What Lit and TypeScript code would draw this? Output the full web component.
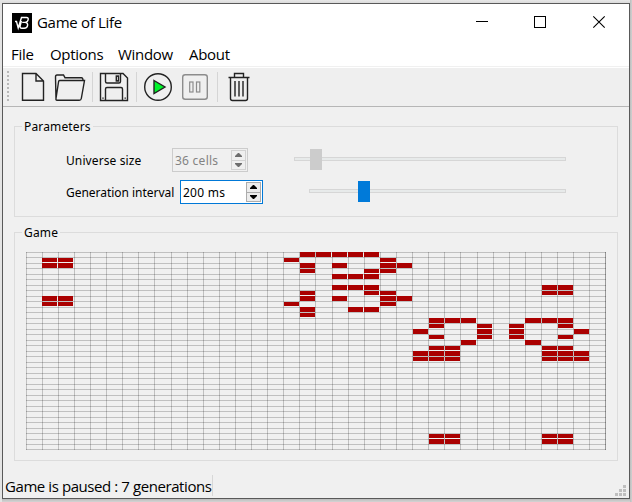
import { LitElement, html, css, svg } from "lit";
import { customElement, property } from "lit/decorators.js";

const SIZE = 36;

// Living cells, keyed by row.
const LIVE: Record<number, number[]> = {
  0: [17, 18, 19, 20, 21],
  1: [1, 2, 16, 22],
  2: [1, 2, 17, 19, 22, 23],
  3: [17, 21, 22],
  4: [19, 20, 21],
  6: [19, 20, 21, 32, 33],
  7: [17, 21, 22, 32, 33],
  8: [1, 2, 17, 19, 22, 23],
  9: [1, 2, 16, 22],
  10: [17, 20, 21],
  11: [17],
  12: [25, 26, 27, 31, 32, 33],
  13: [25, 28, 30, 33],
  14: [24, 28, 30, 34],
  15: [25, 28, 30, 33],
  16: [27, 31],
  17: [25, 26, 32, 33],
  18: [24, 25, 26, 32, 33, 34],
  19: [24, 25, 26, 32, 33, 34],
  33: [25, 26, 32, 33],
  34: [25, 26, 32, 33],
};

const lineX = (i: number) => Math.floor(i * 16.1057 + 0.05);
const lineY = (i: number) => Math.min(197, Math.floor(i * 5.5));
const cellX = (i: number) => Math.floor(i * 16.1112 + 0.45);
const cellY = (i: number) => Math.ceil(i * 5.5);

@customElement("life-board")
export class LifeBoard extends LitElement {
  static styles = css`
    :host { display: block; height: 198px; }
    svg { display: block; shape-rendering: crispEdges; }
    .line { fill: #000; fill-opacity: 0.2; }
    .cell { fill: #aa0000; }
  `;
  render() {
    const idx = Array.from({ length: SIZE + 1 }, (_, i) => i);
    return html`<svg width="580" height="198" viewBox="0 0 580 198">
      ${idx.map((i) => svg`<rect class="line" x=${lineX(i)} y="0" width="1" height="198" />`)}
      ${idx.map((i) => svg`<rect class="line" x="0" y=${lineY(i)} width="580" height="1" />`)}
      <rect class="line" x="579" y="0" width="1" height="198" />
      ${Object.entries(LIVE).map(([r, cols]) =>
        cols.map(
          (c) => svg`<rect class="cell" x=${cellX(c)} y=${cellY(+r)}
            width=${cellX(c + 1) - cellX(c) - 1} height=${cellY(+r + 1) - cellY(+r) - 1} />`
        )
      )}
    </svg>`;
  }
}

@customElement("group-box")
export class GroupBox extends LitElement {
  @property() label = "";
  static styles = css`
    :host { display: block; box-sizing: border-box; border: 1px solid #dcdcdc; }
    .label {
      display: block; width: max-content; height: 16px; line-height: 18px;
      margin: -9px 0 0 7px; padding: 0 2px; background: #f0f0f0; letter-spacing: 0.15px;
    }
  `;
  render() {
    return html`<span class="label">${this.label}</span><slot></slot>`;
  }
}

@customElement("spin-box")
export class SpinBox extends LitElement {
  @property() value = "";
  @property({ type: Boolean, reflect: true }) disabled = false;
  static styles = css`
    :host {
      display: flex; box-sizing: border-box; height: 24px; width: 83px; padding: 1px;
      border: 1px solid #0078d7; background: #fff; color: #000;
    }
    :host([disabled]) { width: 76px; border-color: #ccc; background: #f0f0f0; color: #838383; }
    .value { flex: 1; padding-left: 1px; line-height: 22px; white-space: nowrap; letter-spacing: 0.25px; }
    .buttons { display: flex; flex-direction: column; width: 15px; }
    .btn {
      flex: 1; display: flex; align-items: center; justify-content: center;
      border: 1px solid #acacac; background: #ececec; box-sizing: border-box; height: 10px;
    }
    .btn + .btn { border-top: 0; }
    :host([disabled]) .btn { border-color: #d2d2d2; background: #efefef; }
    svg { display: block; fill: currentColor; }
    :host([disabled]) svg { fill: #6d6d6d; }
  `;
  render() {
    return html`<span class="value">${this.value}</span>
      <span class="buttons">
        <span class="btn"><svg width="7" height="4" viewBox="0 0 7 4"><path d="M3 0h1l3 3v1H0V3z" /></svg></span>
        <span class="btn"><svg width="7" height="4" viewBox="0 0 7 4"><path d="M0 0h7v1L4 4H3L0 1z" /></svg></span>
      </span>`;
  }
}

@customElement("value-slider")
export class ValueSlider extends LitElement {
  @property({ type: Number }) offset = 0;
  @property({ type: Boolean, reflect: true }) disabled = false;
  static styles = css`
    :host { display: flex; align-items: center; position: relative; height: 21px; }
    .track { flex: 1; height: 4px; box-sizing: border-box; border: 1px solid #d6d6d6; background: #e7eaea; }
    .thumb { position: absolute; top: 0; width: 12px; height: 21px; background: #007ad9; }
    :host([disabled]) .thumb { background: #ccc; }
  `;
  render() {
    return html`<span class="track"></span><span class="thumb" style="left:${this.offset}px"></span>`;
  }
}

@customElement("app-root")
export class AppRoot extends LitElement {
  static styles = css`
    :host {
      display: block; box-sizing: border-box; width: 632px; height: 502px; padding: 3px 2px 3px 2px;
      overflow: hidden; color: #000;
      background: linear-gradient(90deg, #e4e4e4 0 2px, transparent 2px 630px, #bdbdbd 630px, #d0d0d0),
        linear-gradient(#e8e8e8, #dadada 3px, #dadada 499px, #bcbcbc 499px, #d4d4d4);
      font: 12px/16px "Noto Sans", "Liberation Sans", sans-serif;
    }
    .window {
      display: flex; flex-direction: column; box-sizing: border-box; width: 628px; height: 496px;
      border: 1px solid #595959; background: #f0f0f0;
    }
    .title, .menu, .status { font-family: "Open Sans", "Noto Sans", sans-serif; font-size: 15px; }
    .title { display: flex; height: 37px; padding-left: 9px; background: #fff; align-items: center; }
    .title .name { margin-left: 5px; line-height: 37px; letter-spacing: -0.3px; }
    .controls { display: flex; margin-left: auto; }
    .controls svg { width: 58px; height: 37px; display: block; }
    .menu { display: flex; height: 25px; line-height: 26px; padding-left: 8px; background: #fff; border-bottom: 1px solid #f0f0f0; }
    .menu .file { width: 39px; }
    .menu .options { width: 68px; }
    .menu .window-item { width: 71px; }
    .menu span { letter-spacing: -0.3px; white-space: nowrap; }
    .tools {
      display: flex; align-items: center; box-sizing: border-box; height: 40px; background: #efefef;
      border-top: 1px solid #fff; border-bottom: 1px solid #b6b6b6; padding: 0 0 1px 4px;
    }
    .tools svg { display: block; flex: none; fill: none; stroke: #222; stroke-width: 1.4; }
    .grip {
      width: 2px; height: 31px; margin-right: 9px;
      background: repeating-linear-gradient(#b8b8b8 0 2px, transparent 2px 4px);
    }
    .sep { width: 1px; height: 30px; background: #d5d5d5; margin: 0 6px; }
    .sep.wide { margin-left: 7px; }
    .doc { margin-right: 6px; }
    .play { margin-right: 7px; }
    .tools .pause { stroke: #8c8c8c; }
    .params { margin: 19px 11px 0; height: 91px; }
    .row { display: flex; height: 24px; align-items: center; padding-left: 51px; }
    .row.first { margin-top: 14px; }
    .row.second { margin-top: 8px; }
    .row .cap { white-space: nowrap; padding-top: 2px; }
    .first .cap { width: 106px; letter-spacing: 0.1px; }
    .second .cap { width: 114px; letter-spacing: -0.03px; }
    .first value-slider { width: 272px; margin: -2px 0 0 46px; }
    .second value-slider { width: 257px; margin: -2px 0 0 46px; }
    .game { margin: 15px 11px 0; height: 229px; }
    .board { margin: 12px 0 0 11px; }
    .status { display: flex; flex: 1; align-items: flex-end; justify-content: space-between; padding-left: 2px; }
    .msg {
      height: 21px; line-height: 23px; margin-bottom: 2px; width: 207px; border-right: 1px solid #d7d7d7;
      white-space: nowrap; letter-spacing: -0.42px;
    }
    .sizegrip { display: block; fill: #bfbfbf; margin: 0 3px 2px 0; shape-rendering: crispEdges; }
  `;

  render() {
    return html`<div class="window">
      <div class="title">
        <svg width="20" height="20" viewBox="0 0 20 20" fill="none">
          <rect width="20" height="20" fill="#000" />
          <path d="M3 8.500h1.500L6.200 15 9.500 4.500h5q2 0 1.700 2-.3 2.500-3 2.900h-3M13 9.400q3 .3 2.600 3-.4 2.800-3.400 2.800h-2.400q-2.200 0-1.600-2.700l1.200-4.500" stroke="#fff" stroke-width="1.400" />
        </svg>
        <span class="name">Game of Life</span>
        <div class="controls">
          <svg viewBox="455 4 58 37"><path d="M476 21.500h12" stroke="#000" /></svg>
          <svg viewBox="513 4 58 37"><rect x="534.5" y="16.500" width="11" height="11" fill="none" stroke="#000" /></svg>
          <svg viewBox="571 4 58 37"><path d="M593.300 16.300l11.400 11.400M604.700 16.300l-11.400 11.400" stroke="#000" stroke-width="1.100" /></svg>
        </div>
      </div>
      <div class="menu">
        <span class="file">File</span><span class="options">Options</span>
        <span class="window-item">Window</span><span>About</span>
      </div>
      <div class="tools">
        <span class="grip"></span>
        <svg class="doc" width="30" height="30" viewBox="18 72 30 30">
          <path d="M22.500 73.500h13.500l7.500 7.500v19.300h-21zM36 73.500v7.500h7.500" />
        </svg>
        <svg width="32" height="30" viewBox="54 72 32 30">
          <path d="M56 99.500l-.5-22.500q0-2 1.500-2h6.500l1.500 2.700h16.500q1.500 0 1.500 2.800M59.500 80.500h25l-3.200 18q-.3 1.800-2 1.800H57q-1.300 0-1-1.800l2.600-17q.2-1 .9-1z" />
        </svg>
        <span class="sep"></span>
        <svg width="30" height="30" viewBox="99 72 30 30">
          <path d="M100.500 73.500h22.500l4.500 4.500v22.500h-27zM105.500 73.500v8q0 1.500 1.500 1.500h12q1.500 0 1.500-1.500v-8M105.500 100.500v-11.500q0-1.500 1.500-1.500h14q1.500 0 1.500 1.500v11.500" />
          <rect x="116.300" y="76" width="2.200" height="5" />
          <path d="M103 97.500v1.200M125.200 97.500v1.200" />
        </svg>
        <span class="sep wide"></span>
        <svg class="play" width="30" height="30" viewBox="143 72 30 30">
          <circle cx="158" cy="87" r="13.300" />
          <path d="M154 80.500l11 6.500-11 6.500z" fill="#00f52a" />
        </svg>
        <svg class="pause" width="30" height="30" viewBox="180 72 30 30">
          <rect x="182.700" y="74.700" width="24.600" height="24.600" rx="2.500" />
          <rect x="189.700" y="82" width="3.300" height="10" stroke-width="1.200" />
          <rect x="196.500" y="82" width="3.300" height="10" stroke-width="1.200" />
        </svg>
        <span class="sep wide"></span>
        <svg width="30" height="30" viewBox="224 72 30 30">
          <path d="M228.500 77.500h21M234.500 77v-3.500h9v3.500M230.500 77.500v21q0 2 2 2h13q2 0 2-2v-21M235 81v15.500M239 81v15.500M243 81v15.500" />
        </svg>
      </div>
      <group-box class="params" label="Parameters">
        <div class="row first">
          <span class="cap">Universe size</span>
          <spin-box value="36 cells" disabled></spin-box>
          <value-slider offset="16" disabled></value-slider>
        </div>
        <div class="row second">
          <span class="cap">Generation interval</span>
          <spin-box value="200 ms"></spin-box>
          <value-slider offset="49"></value-slider>
        </div>
      </group-box>
      <group-box class="game" label="Game">
        <life-board class="board"></life-board>
      </group-box>
      <div class="status">
        <span class="msg">Game is paused : 7 generations</span>
        <svg class="sizegrip" width="11" height="11" viewBox="0 0 11 11">
          <path d="M8 0h3v3H8zM4 4h3v3H4zM8 4h3v3H8zM0 8h3v3H0zM4 8h3v3H4zM8 8h3v3H8z" />
        </svg>
      </div>
    </div>`;
  }
}
